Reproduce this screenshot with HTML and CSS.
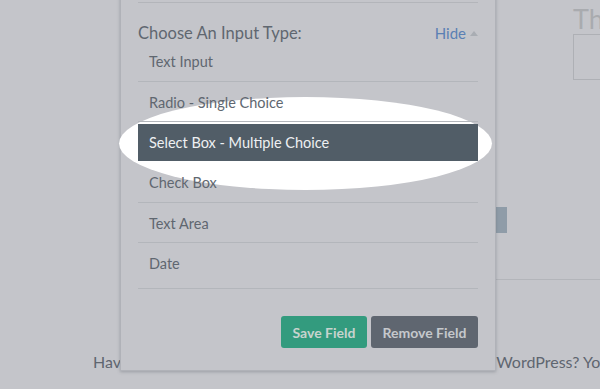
FILE: index.html
```html
<!DOCTYPE html>
<html>
<head>
    <title>Form Builder - Choose Input Type</title>
    <link rel="stylesheet" href="styles.css">
</head>
<body>
    <div class="page">
        <div class="side">
            <h2>Thank you</h2>
            <div class="side-box"></div>
        </div>
        <div class="ghost-btn"></div>
        <div class="rule"></div>
        <p class="note">Have an integration with a website builder like Weebly or WordPress? You'll find it here.</p>

        <div class="panel">
            <div class="divider"></div>
            <div class="panel-head">
                <span class="panel-title">Choose An Input Type:</span>
                <a class="toggle" href="#">Hide <span class="caret"></span></a>
            </div>
            <div class="spot"></div>
            <ul class="types">
                <li class="first">Text Input</li>
                <li>Radio - Single Choice</li>
                <li class="active">Select Box - Multiple Choice</li>
                <li>Check Box</li>
                <li>Text Area</li>
                <li class="last">Date</li>
            </ul>
            <div class="actions">
                <button class="btn save">Save Field</button>
                <button class="btn remove">Remove Field</button>
            </div>
        </div>
    </div>
</body>
</html>
```

FILE: styles.css
```css
body {
    margin: 0;
    background: #c4c5ca;
    font-family: Lato, 'Open Sans', sans-serif;
    color: #606770;
    overflow: hidden;
}

.page {
    position: relative;
    width: 600px;
    height: 389px;
    overflow: hidden;
}

/* background content, dimmed */
.side {
    margin-left: 573px;
    padding-top: 4px;
    width: 200px;
}

.side h2 {
    margin: 0;
    font-size: 27px;
    font-weight: 400;
    color: #a9abaf;
    line-height: 30px;
    white-space: nowrap;
}

.side-box {
    height: 44px;
    border: 1px solid #aeb0b5;
}

.ghost-btn {
    margin: 127px 0 0 440px;
    width: 67px;
    height: 26px;
    background: #8f9ca8;
}

.rule {
    margin: 46px 0 0 300px;
    border-top: 1px solid #b3b5ba;
}

.note {
    margin: 72px 0 0;
    padding-left: 93px;
    font-size: 16px;
    white-space: nowrap;
    color: #5f6670;
}

/* modal panel */
.panel {
    position: absolute;
    top: -30px;
    left: 120px;
    width: 340px;
    padding: 0 17px 22px;
    background: #c4c5ca;
    border: 1px solid #b0b2b8;
    border-top: none;
    box-shadow: 0 1px 3px rgba(80, 85, 95, 0.35);
}

.divider {
    height: 32px;
    border-bottom: 1px solid #b3b5ba;
}

.panel-head {
    display: flex;
    justify-content: space-between;
    align-items: center;
    height: 26px;
    padding-top: 17px;
}

.panel-title {
    font-size: 16.5px;
}

.toggle {
    color: #5a80b4;
    text-decoration: none;
    font-size: 15px;
    display: flex;
    align-items: center;
    gap: 4px;
}

.caret {
    width: 0;
    height: 0;
    border-left: 4px solid transparent;
    border-right: 4px solid transparent;
    border-bottom: 5px solid #a9adb3;
}

.spot {
    position: absolute;
    left: -2px;
    top: 127px;
    width: 373px;
    height: 93px;
    border-radius: 50%;
    background: #fff;
}

.types {
    position: relative;
    list-style: none;
    margin: 0;
    padding: 0;
    font-size: 14.5px;
}

.types li {
    height: 39px;
    line-height: 42px;
    padding-left: 11px;
    border-bottom: 1px solid #b3b6bb;
}

.types li.first {
    height: 35px;
    line-height: 32px;
}

.types li.active {
    height: 37px;
    margin-top: 2px;
    line-height: 37px;
    background: #515d67;
    color: #eef0f2;
    border-bottom: none;
}

.types li.active + li {
    height: 41px;
    line-height: 44px;
}

.types li.last {
    height: 45px;
}

.actions {
    display: flex;
    justify-content: flex-end;
    gap: 4px;
    margin-top: 27px;
}

.btn {
    height: 32px;
    border: none;
    border-radius: 3px;
    padding: 0;
    white-space: nowrap;
    font-family: Lato, sans-serif;
    font-size: 14px;
    font-weight: 700;
    color: #c8d3ce;
}

.save {
    background: #339b7e;
    width: 86px;
}

.remove {
    background: #5f6670;
    color: #c5c8cc;
    width: 107px;
}
```
